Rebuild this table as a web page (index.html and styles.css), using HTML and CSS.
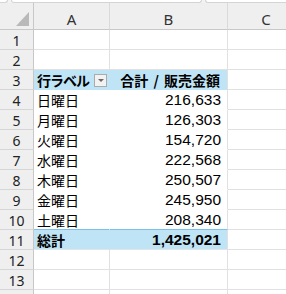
FILE: index.html
```html
<!DOCTYPE html>
<html lang="ja">
<head>
<meta charset="utf-8">
<title>ピボットテーブル</title>
<link rel="stylesheet" href="styles.css">
</head>
<body>
<div class="app">
  <div class="topbar">
    <div class="box box-name"></div>
    <div class="box box-func"></div>
    <div class="box box-formula"></div>
  </div>
  <div class="sheet">
    <div class="corner"><span class="corner-tri"></span></div>
    <div class="colhead">A</div>
    <div class="colhead">B</div>
    <div class="colhead last">C</div>

    <div class="rowhead">1</div><div class="cell"></div><div class="cell"></div><div class="cell"></div>
    <div class="rowhead">2</div><div class="cell"></div><div class="cell"></div><div class="cell"></div>

    <div class="rowhead">3</div>
    <div class="cell pv-head pv-a"><span class="row-label">行ラベル</span><span class="dd"><span class="dd-tri"></span></span></div>
    <div class="cell pv-head pv-b num-label">合計 / 販売金額</div>
    <div class="cell"></div>

    <div class="rowhead">4</div><div class="cell pv pv-a">日曜日</div><div class="cell pv pv-b num">216,633</div><div class="cell"></div>
    <div class="rowhead">5</div><div class="cell pv pv-a">月曜日</div><div class="cell pv pv-b num">126,303</div><div class="cell"></div>
    <div class="rowhead">6</div><div class="cell pv pv-a">火曜日</div><div class="cell pv pv-b num">154,720</div><div class="cell"></div>
    <div class="rowhead">7</div><div class="cell pv pv-a">水曜日</div><div class="cell pv pv-b num">222,568</div><div class="cell"></div>
    <div class="rowhead">8</div><div class="cell pv pv-a">木曜日</div><div class="cell pv pv-b num">250,507</div><div class="cell"></div>
    <div class="rowhead">9</div><div class="cell pv pv-a">金曜日</div><div class="cell pv pv-b num">245,950</div><div class="cell"></div>
    <div class="rowhead">10</div><div class="cell pv pv-a pv-last">土曜日</div><div class="cell pv pv-b num pv-last">208,340</div><div class="cell"></div>

    <div class="rowhead">11</div>
    <div class="cell pv-total pv-a">総計</div>
    <div class="cell pv-total pv-b num">1,425,021</div>
    <div class="cell"></div>

    <div class="rowhead">12</div><div class="cell"></div><div class="cell"></div><div class="cell"></div>
    <div class="rowhead">13</div><div class="cell"></div><div class="cell"></div><div class="cell"></div>
    <div class="rowhead"></div><div class="cell"></div><div class="cell"></div><div class="cell"></div>
  </div>
</div>
</body>
</html>
```

FILE: styles.css
```css
html, body {
  margin: 0;
  padding: 0;
  background: #ffffff;
}

.app {
  width: 286px;
  height: 294px;
  overflow: hidden;
  background: #f3f3f3;
}

/* strip left by the name box / formula bar above the grid */
.topbar {
  height: 3px;
  display: flex;
  gap: 3px;
  overflow: hidden;
}

.box {
  height: 2px;
  background: #ffffff;
  border: 1px solid #d4d4d4;
  border-top: none;
  border-radius: 0 0 3px 3px;
}

.box-name { width: 7px; border-left: none; border-radius: 0 0 3px 0; }
.box-func { width: 189px; }
.box-formula { flex: 1; border-right: none; border-radius: 0 0 0 3px; }

.sheet {
  display: grid;
  grid-template-columns: 34px 76px 118px 76px;
  grid-template-rows: 27px repeat(14, 20px);
  font-family: "Noto Sans CJK JP", "Noto Sans", sans-serif;
  font-size: 14px;
  color: #000000;
}

.corner {
  background: #efefef;
  border-right: 1px solid #c8c8c8;
  border-bottom: 1px solid #c8c8c8;
  box-sizing: border-box;
  display: flex;
  align-items: flex-end;
  justify-content: flex-end;
  padding: 0 4px 3px 0;
}

.corner-tri {
  width: 0;
  height: 0;
  border-left: 13px solid transparent;
  border-bottom: 14px solid #b9b9b9;
}

.colhead {
  background: #efefef;
  border-right: 1px solid #dadada;
  border-bottom: 1px solid #c8c8c8;
  box-sizing: border-box;
  display: flex;
  align-items: center;
  justify-content: center;
  padding-top: 6px;
  font-family: "Noto Sans", "Open Sans", sans-serif;
  font-size: 15px;
  color: #333333;
}

.colhead.last { border-right: none; }

.rowhead {
  background: #efefef;
  border-right: 1px solid #c8c8c8;
  border-bottom: 1px solid #d6d6d6;
  box-sizing: border-box;
  display: flex;
  align-items: center;
  justify-content: center;
  font-family: "Noto Sans", "Open Sans", sans-serif;
  font-size: 14px;
  color: #222222;
  padding-top: 1px;
}

.cell {
  background: #ffffff;
  border-right: 1px solid #e1e1e1;
  border-bottom: 1px solid #e1e1e1;
  box-sizing: border-box;
  display: flex;
  align-items: center;
  padding: 1px 3px 0 3px;
  white-space: nowrap;
  overflow: hidden;
}

.num,
.num-label {
  justify-content: flex-end;
  padding-right: 7px;
}

.num-label {
  word-spacing: 2px;
}

.num {
  font-family: "Liberation Sans", Arial, sans-serif;
  font-size: 15.5px;
  padding-right: 6px;
}

.row-label {
  letter-spacing: -1px;
}

/* pivot table body: no gridlines inside */
.pv.pv-a { border-right-color: #ffffff; }
.pv { border-bottom-color: #ffffff; }
.pv.pv-last { border-bottom-color: #7ec1e7; }

.pv-head {
  background: #bfe4f6;
  border-bottom-color: #bfe4f6;
  font-weight: 700;
}

.pv-head.pv-a {
  border-right-color: #bfe4f6;
  justify-content: space-between;
  padding-right: 2px;
}

.pv-total {
  background: #bfe4f6;
  border-bottom-color: #dfe6ea;
  font-weight: 700;
}

.pv-total.pv-a { border-right-color: #bfe4f6; }

/* filter dropdown on the row label header */
.dd {
  width: 13px;
  height: 13px;
  box-sizing: border-box;
  background: #f2f2f2;
  border: 1px solid #ababab;
  display: flex;
  align-items: center;
  justify-content: center;
}

.dd-tri {
  width: 0;
  height: 0;
  border-left: 3px solid transparent;
  border-right: 3px solid transparent;
  border-top: 3px solid #6a6a6a;
}
```
